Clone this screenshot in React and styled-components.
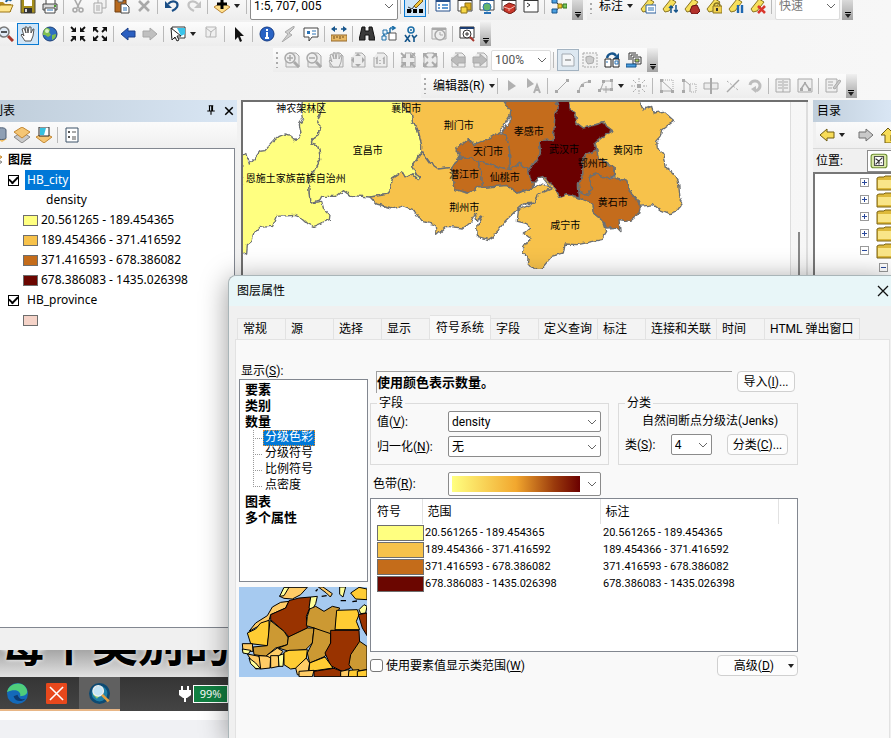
import React from "react";
import styled, { createGlobalStyle, css } from "styled-components";

const Global = createGlobalStyle`
  * { box-sizing: border-box; }
  body { margin: 0; background: #f0f0f0; }
  button, select, input { font: inherit; color: inherit; margin: 0; }
  body, #root { font-family: Roboto, "Noto Sans CJK SC", sans-serif; font-size: 12px; line-height: 16px; color: #000; }
`;

/* ---------- Icons ---------- */

const G = "#a9a9a9";
const zoomLens = (sign, c, handle) => (
  <>
    <path d="M10 10l5 5" stroke={handle} strokeWidth="3" />
    <circle cx="6" cy="6" r="5" fill={c === G ? "#eee" : "#dfeaf5"} stroke={c} strokeWidth="1.5" />
    <path d={sign === "+" ? "M3 6h6M6 3v6" : "M3 6h6"} stroke={c === G ? G : "#222"} strokeWidth="1.5" />
  </>
);
const page = <path d="M5 1h7l3 3v11H2V5" fill="#ececec" stroke={G} />;
const tag = (
  <path d="M1 11L9 1l5 3-7 9-4 1z" fill="#f6df5a" stroke="#8a7420" />
);
const arrowsIn = (c) => (
  <>
    <path d="M1 1l4 4M15 1l-4 4M1 15l4-4M15 15l-4-4" stroke={c} strokeWidth="1.8" />
    <path d="M6 1v5H1zM10 1v5h5zM6 15v-5H1zM10 15v-5h5z" fill={c} />
  </>
);
const arrowsOut = (c) => (
  <>
    <path d="M6 6L2 2M10 6l4-4M6 10l-4 4M10 10l4 4" stroke={c} strokeWidth="1.8" />
    <path d="M1 1h5L1 6zM15 1h-5l5 5zM1 15h5l-5-5zM15 15h-5l5-5z" fill={c} />
  </>
);
const leftArrow = (f, s) => <path d="M1 8l7-6v3h7v6H8v3z" fill={f} stroke={s} />;
const rightArrow = (f, s) => <path d="M15 8L8 2v3H1v6h7v3z" fill={f} stroke={s} />;
const hand = (f, s) => (
  <path
    d="M5 15l-4-6 1-1 2 2-2-7 2-1 2 5-1-6h2l1 6 1-6h2v6l2-4h1l-1 7-2 5z"
    fill={f}
    stroke={s}
  />
);

const icons = {
  open: <><path d="M0 4h5l2 2h6v8H0z" fill="#b98c1c" /><path d="M2 7h13l-3 7H0z" fill="#ffe58c" stroke="#9a7414" /><path d="M8 4c1-3 4-3 5-1" stroke="#1a5a94" strokeWidth="2" fill="none" /></>,
  save: <><path d="M1 1h14v14H1z" fill="#a58e1c" stroke="#4f4a36" /><path d="M4 1h8v7H4z" fill="#fff" /><path d="M4 10h8v5H4z" fill="#333" /><path d="M5 11h2v3H5z" fill="#ddd" /></>,
  print: <><path d="M4 1h9v6H4z" fill="#fff" stroke="#444" /><path d="M1 6h14v6H1z" fill="#d9d9d9" stroke="#444" /><path d="M3 10h10v5H3z" fill="#fff" stroke="#444" /><path d="M5 12h6" stroke="#2a72b5" /><path d="M12 8h2" stroke="#4a9a30" strokeWidth="2" /></>,
  cut: <><path d="M4 0l5 10M12 0L7 10" stroke={G} strokeWidth="1.6" /><circle cx="5" cy="12" r="2" fill="none" stroke={G} strokeWidth="1.6" /><circle cx="11" cy="12" r="2" fill="none" stroke={G} strokeWidth="1.6" /></>,
  copy: <><path d="M6 1h8v9H6z" fill="#f2f2f2" stroke={G} /><path d="M2 5h8v10H2z" fill="#f2f2f2" stroke={G} /><path d="M4 8h4M4 10h4M4 12h4" stroke={G} /></>,
  paste: <><path d="M1 2h11v12H1z" fill="#b7691e" stroke="#704012" /><path d="M4 0h5v4H4z" fill="#ddd" stroke="#555" /><path d="M7 6h5l3 3v6H7z" fill="#fff" stroke="#444" /><path d="M9 10h4M9 12h4" stroke="#2a72b5" /></>,
  del: <path d="M3 3l10 10M13 3L3 13" stroke={G} strokeWidth="2.6" />,
  undo: <><path d="M4 6c5-5 11-2 9 3-1 2-3 3-5 4" stroke="#1b4f86" strokeWidth="2.2" fill="none" /><path d="M1 3v7h7z" fill="#1b4f86" /></>,
  redo: <><path d="M12 6c-5-5-11-2-9 3 1 2 3 3 5 4" stroke="#c2c2c2" strokeWidth="2.2" fill="none" /><path d="M15 3v7H8z" fill="#c2c2c2" /></>,
  add: <><path d="M8 4l8 5-8 6-8-6z" fill="#ffdf8a" stroke="#b98335" /><path d="M8 1v10M3 6h10" stroke="#000" strokeWidth="3" /></>,
  sketch: <><path d="M1 9l4 2 3-4" stroke="#333" fill="none" /><path d="M7 8L14 1l2 2-7 7z" fill="#f1c53b" stroke="#7d5a16" /><path d="M2 13h12" stroke="#000" strokeDasharray="3 2" /><path d="M0 11h4v4H0zM6 11h4v4H6zM12 11h4v4h-4z" fill="#000" /></>,
  toc: <><path d="M1 2h14v11H1z" fill="#fff" stroke="#254f8a" /><path d="M1 3h14" stroke="#254f8a" strokeWidth="2" /><path d="M3 7h2M3 10h2M7 7h6M7 10h6" stroke="#2c78c4" strokeWidth="1.5" /></>,
  catalog: <><path d="M1 2h14v11H1z" fill="#fff" stroke="#444" /><path d="M1 2h14" stroke="#333" strokeWidth="2" /><path d="M8 5h6v7H8z" fill="#e0b01c" stroke="#8d7112" /><path d="M4 9h6v6H4z" fill="#f7d948" stroke="#8d7112" /></>,
  search: <><path d="M1 2h14v10H1z" fill="#fff" stroke="#444" /><path d="M1 2h14" stroke="#254f8a" strokeWidth="2" /><circle cx="8" cy="9" r="4" fill="#62b66c" stroke="#2a72b5" /><path d="M5 15h7" stroke="#2a72b5" strokeWidth="2" /></>,
  toolbox: <><path d="M1 2h14v10H1z" fill="#fff" stroke="#444" /><path d="M1 2h14" stroke="#333" strokeWidth="2" /><path d="M3 8l5-3 6 2v6l-5 3-6-3z" fill="#c9382b" stroke="#741a12" /><path d="M3 9l6 2 5-3M8 10v3" stroke="#f2b8b0" fill="none" /></>,
  python: <><path d="M1 2h14v12H1z" fill="#fff" stroke="#333" /><path d="M1 2h14" stroke="#333" strokeWidth="2" /><path d="M4 5l3 2-3 2" stroke="#333" fill="none" /></>,
  model: <><path d="M5 4l4 4-4 5M9 8h5" stroke="#333" fill="none" /><path d="M1 1h5v4H1zM1 11h5v4H1z" fill="#4b9fe0" stroke="#17558c" /><path d="M7 6h4v4H7z" fill="#f0c425" stroke="#8d7112" /><path d="M12 6h4v4h-4z" fill="#79c45a" stroke="#33761f" /></>,
  tagList: <>{tag}<path d="M6 7h10v8H6z" fill="#fff" stroke="#2a5f9c" /><path d="M8 10h6M8 12h6" stroke="#2a72b5" /></>,
  tagOrder: <>{tag}<path d="M9 15V8M7 10l2-2 2 2M14 7v7M12 12l2 2 2-2" stroke="#17558c" strokeWidth="1.5" fill="none" /></>,
  tagWeight: <>{tag}<path d="M8 8l5-1 3 6-3 3H8l-2-3z" fill="#b2302a" stroke="#611" /></>,
  tagLock: <>{tag}<path d="M8 8c0-4 6-4 6 0" stroke="#8a7420" strokeWidth="1.5" fill="none" /><path d="M7 8h9v7H7z" fill="#f0cf4e" stroke="#8a7420" /><path d="M11 10v3" stroke="#333" strokeWidth="2" /></>,
  tagPause: <>{tag}<path d="M10 7v8M14 7v8" stroke="#1d66b0" strokeWidth="2.4" /></>,
  tagNone: <>{tag}<path d="M8 8l7 7M15 8l-7 7" stroke="#d9362c" strokeWidth="2.6" /></>,
  zoomOut: zoomLens("-", "#777", "#a7372d"),
  hand: hand("#fff", "#555"),
  globe: <><circle cx="8" cy="8" r="7" fill="#2f6fc0" stroke="#1d3f75" /><path d="M4 2c4 0 5 2 3 4l2 3-3 2-3-2-2 0C1 6 2 3 4 2zM10 9l4-1c0 4-2 5-4 6z" fill="#7fbf4f" /><circle cx="5" cy="5" r="2" fill="#d6efc4" /></>,
  fixedIn: arrowsIn("#111"),
  fixedOut: arrowsOut("#111"),
  back: leftArrow("#2a5fc0", "#1a3f88"),
  forward: rightArrow("#c0c0c0", "#a8a8a8"),
  selectFeat: <><path d="M2 1h13v11H2z" fill="#fff" stroke="#333" /><path d="M7 2h8v6l-4 2z" fill="#3ac4ea" /><path d="M1 2l1 12 3-3 2 4 2-1-2-4h4z" fill="#fff" stroke="#222" /></>,
  clearSel: <><path d="M3 1h10v10H3z" fill="#f0f0f0" stroke="#b5b5b5" /><path d="M3 2l5 4 5-4M8 6l-1 5" stroke="#b5b5b5" fill="none" /></>,
  pointer: <path d="M4 1v13l3-3 2 5 2-1-2-5h4z" fill="#111" />,
  info: <><circle cx="8" cy="8" r="7" fill="#2a63c4" stroke="#153c85" /><path d="M8 3v2M7 7h1v5M6 12h4" stroke="#fff" strokeWidth="2" fill="none" /></>,
  bolt: <path d="M13 0L4 6l3 2-6 8 10-7-3-2 5-5z" fill="#cfcfcf" stroke={G} />,
  note: <><path d="M1 2h14v9H9l-3 4v-4H1z" fill="#fff" stroke="#444" /><path d="M4 5h3v3H4z" fill="#2a72b5" /><path d="M9 5h4M9 8h4" stroke="#2a72b5" /></>,
  measure: <><path d="M0 9h16v6H0z" fill="#e8b865" stroke="#95692b" /><path d="M3 10v3M6 10v2M9 10v3M12 10v2" stroke="#704a18" /><path d="M1 3h5M10 3h5" stroke="#17558c" strokeWidth="1.5" /><path d="M0 3l4-3v6zM16 3l-4-3v6z" fill="#17558c" /></>,
  find: <path d="M3 1h3v4h4V1h3l3 13h-6v-5H6v5H0z" fill="#3a3a3a" stroke="#111" />,
  route: <><path d="M3 12V7h6V2M9 2h4M11 0l3 2-3 2" stroke="#1d6fa8" fill="none" strokeWidth="1.5" /><path d="M1 10h4v4H1zM2 4h4v4H2z" fill="#eaf5fc" stroke="#1d6fa8" /><path d="M8 7h7v7H8z" fill="#fff" stroke="#555" /></>,
  xy: <><circle cx="8" cy="4" r="3" fill="none" stroke="#1d6fa8" strokeWidth="1.6" /><circle cx="8" cy="4" r="1" fill="#1d6fa8" /><path d="M2 9l5 7M7 9l-5 7M9 9l2 3v4M14 9l-3 3" stroke="#15558a" strokeWidth="1.6" fill="none" /></>,
  clock: <><path d="M1 2h14v11H1z" fill="#efefef" stroke={G} /><path d="M1 3h14" stroke={G} strokeWidth="2" /><circle cx="9" cy="9" r="5" fill="#eee" stroke={G} strokeWidth="1.5" /><path d="M9 6v3h3" stroke={G} fill="none" /></>,
  viewer: <><path d="M1 1h14v11H1z" fill="#fff" stroke="#333" /><path d="M1 2h14" stroke="#1b3d72" strokeWidth="2" /><circle cx="8" cy="8" r="4" fill="#fff" stroke="#333" /><path d="M6 8h4M8 6v4" stroke="#333" /><path d="M11 11l4 4" stroke="#a7372d" strokeWidth="2" /></>,
  pZoomIn: <>{page}{zoomLens("+", G, G)}</>,
  pZoomOut: <>{page}{zoomLens("-", G, G)}</>,
  pHand: <>{page}{hand("#eee", G)}</>,
  pFull: <>{page}<path d="M8 1l3 3H5zM8 15l-3-3h6zM1 8l3-3v6zM15 8l-3 3V5z" fill={G} /></>,
  p11: <>{page}<path d="M4 7l1-1v6M11 7l1-1v6M8 8v1M8 11v1" stroke={G} strokeWidth="1.5" fill="none" /></>,
  pIn: <>{page}{arrowsIn(G)}</>,
  pOut: <>{page}{arrowsOut(G)}</>,
  pBack: <>{page}{leftArrow("#bbb", G)}</>,
  pNext: <>{page}{rightArrow("#bbb", G)}</>,
  draft: <><path d="M2 2h9l3 3v9H2z" fill="#f4f6f8" stroke="#a2a9b0" /><path d="M5 8h6" stroke="#999" strokeWidth="1.5" /></>,
  focus: <><path d="M1 1h14v14H1z" fill="#f1f1f1" stroke={G} strokeDasharray="2 1" /><path d="M4 5l4-1 4 2-1 5-5 1-2-3z" fill="#ccc" stroke={G} /></>,
  layoutSwap: <><path d="M3 6c1-5 7-6 9-2" stroke="#17558c" strokeWidth="2.4" fill="none" /><path d="M15 1v6H9z" fill="#17558c" /><path d="M1 7h6v8H1zM9 7h6v8H9z" fill="#fff" stroke="#222" /><path d="M2 10h2M11 9h3v3h-3z" stroke="#2a72b5" /></>,
  pages: <><path d="M3 8V1h7M5 8V3h7" fill="none" stroke="#333" /><path d="M7 5h8v7H7z" fill="#fff" stroke="#333" /><path d="M9 7h4v3H9z" fill="#a9d05a" stroke="#444" /><path d="M0 12h10v3H0z" fill="#4b9fe0" stroke="#17558c" /></>,
  eArrow: <path d="M4 2l8 6-8 5z" fill="#b0b0b0" />,
  eArrowA: <><path d="M1 0l7 6-7 4z" fill="#b0b0b0" /><path d="M8 15l3-8 3 8M9 12h4" stroke="#b0b0b0" strokeWidth="2" fill="none" /></>,
  eLine: <><path d="M3 13L13 3" stroke={G} /><path d="M1 12h3v3H1zM12 1h3v3h-3z" fill={G} /></>,
  eArc: <><path d="M3 13C4 7 7 4 13 4" stroke={G} fill="none" /><path d="M1 12h3v3H1zM12 2h3v3h-3zM5 6h3v3H5z" fill={G} /></>,
  eTrace: <><path d="M2 13L6 3h8v8H2" stroke={G} fill="none" /><path d="M4 2h3v3H4zM12 1h3v3h-3zM0 11h3v3H0zM12 10h3v3h-3z" fill={G} /><path d="M8 8v7M5 12h7" stroke={G} /></>,
  eSnap: <><path d="M8 0v4M8 12v4M0 8h4M12 8h4M2 2l3 3M14 2l-3 3M2 14l3-3M14 14l-3-3" stroke={G} strokeDasharray="2 1" /><path d="M6 6h4v4H6z" fill={G} /></>,
  eVert: <><path d="M2 2v11h12L2 2" stroke={G} fill="none" /><path d="M1 1h3v3H1zM1 12h3v3H1zM12 12h3v3h-3z" fill={G} /><path d="M4 2h10v10" stroke={G} fill="none" strokeDasharray="1 1" /></>,
  eReshape: <><path d="M3 2v12M3 2l6 5v7" stroke={G} fill="none" /><path d="M1 1h3v3H1zM1 12h3v3H1z" fill={G} /><path d="M9 6h6v8H9" stroke={G} strokeDasharray="1 1" fill="none" /></>,
  eCut: <><path d="M1 5h14v6H1z" fill="#ececec" stroke={G} /><path d="M8 0v16" stroke={G} strokeWidth="2" /></>,
  eSplit: <><path d="M2 14L14 2" stroke={G} strokeWidth="1.5" /><path d="M2 3l11 9" stroke={G} strokeDasharray="2 2" /></>,
  eRotate: <><path d="M3 7c1-6 10-5 10 1 0 3-2 4-4 5" stroke="#bdbdbd" strokeWidth="3" fill="none" /><path d="M4 11l5-3v7z" fill="#bdbdbd" /></>,
  eTable: <><path d="M1 1h14v13H1z" fill="#efefef" stroke={G} /><path d="M3 4h4M9 4h4M3 7h4M9 7h4M3 10h4M9 10h4M8 2v12" stroke={G} /></>,
  eProps: <><path d="M1 1h14v13H1z" fill="#efefef" stroke={G} /><path d="M4 11l4-6 4 6" stroke={G} strokeWidth="1.5" fill="none" /><path d="M3 10h3v3H3zM11 10h3v3h-3zM7 4h2v2H7z" fill={G} /></>,
  eCreate: <><path d="M1 1h11v13H1z" fill="#efefef" stroke={G} /><path d="M3 4h5M3 7h5M3 10h4" stroke={G} /><path d="M8 10l6-8 2 1-6 8z" fill="#ccc" stroke={G} /></>,
  cylinder: <><path d="M5 12l5-2 5 2-5 3z" fill="#f3bf62" /><path d="M5 3c0-3 9-3 9 0v8c0 2-9 2-9 0z" fill="#8fa0b4" stroke="#4e5f75" /></>,
  layers: <><path d="M8 5l8 5-8 6-8-6z" fill="#c9c9c9" stroke="#888" /><path d="M8 0l8 5-8 6-8-6z" fill="#f5c674" stroke="#c28732" /></>,
  visible: <><path d="M8 6l8 4-8 6-8-6z" fill="#f5c674" stroke="#c28732" /><path d="M3 0h10v9H3z" fill="#fff" stroke="#222" /><path d="M4 1h6l-2 7H4z" fill="#36c1e0" /></>,
  listOpts: <><path d="M2 1h12v14H2z" fill="#fff" stroke="#3c5269" /><path d="M4 4h2v2H4zM4 9h2v2H4z" fill="#555" /><path d="M8 5h4M8 10h4M8 12h4" stroke="#555" /></>,
  cBack: leftArrow("#f7dc57", "#6e5b10"),
  cNext: rightArrow("#c9c9c9", "#707070"),
  cUp: <path d="M8 1l7 7h-4v6h5v2H5V8H1z" fill="#f7dc57" stroke="#6e5b10" />,
  gdb: <><rect x="1" y="2" width="14" height="12" rx="2" fill="#dcebaa" stroke="#6d8f30" /><path d="M4 4h8v8H4z" fill="#fff" stroke="#4f4f4f" /><path d="M5 11l6-6M5 6l3 2v3M10 9v1" stroke="#333" fill="none" /></>,
  folder: <><path d="M1 3l2-1h5l1-1h7v14H1z" fill="#ddb93b" stroke="#7a6314" /><path d="M2 5h14v8H2z" fill="#f9e588" /></>,
  pin: <path d="M5 1h6M6 1v7M10 1v7M9 1v7M3 8h10M8 8v5" stroke="#000" strokeWidth="1.5" fill="none" />,
  close: <path d="M3 3l10 10M13 3L3 13" stroke="#000" strokeWidth="2" />,
  closeThin: <path d="M3 3l10 10M13 3L3 13" stroke="#111" strokeWidth="1.3" />,
  edge: <><circle cx="8" cy="8" r="8" fill="#1469b8" /><path d="M0 7C1 1 10-2 14 3c3 4 1 7-4 7 1-4-4-6-10-3z" fill="#4fce7b" /><path d="M5 10c1 4 6 5 9 2-3 1-5 0-6-3z" fill="#0d3b73" /></>,
  redApp: <><rect width="16" height="16" rx="1" fill="#e8481c" /><path d="M3 3l10 10M13 3L3 13" stroke="#fff" strokeWidth="1.2" /></>,
  arcmap: <><circle cx="8" cy="8" r="7" fill="#1d7fa8" stroke="#0d4a73" strokeWidth="2" /><path d="M4 3l4 1 2 4-4 4-3-3z" fill="#8ac66a" /><circle cx="7" cy="6" r="4" fill="#c3e4f5" stroke="#eee" /><path d="M10 9l5 5" stroke="#e4a03f" strokeWidth="2" /></>,
  plug: <><path d="M5 0v5M11 0v5M8 11v5" stroke="#fff" strokeWidth="2" /><path d="M2 4h12v5l-4 3H6L2 9z" fill="#fff" /></>,
};

const Svg = styled.svg`
  display: block;
  flex: none;
`;
const Icon = ({ name, size = 16 }) => (
  <Svg width={size} height={size} viewBox="0 0 16 16" fill="none" aria-hidden="true">
    {icons[name]}
  </Svg>
);
const Caret = () => (
  <Svg width="6" height="4" viewBox="0 0 6 4" aria-hidden="true">
    <path d="M0 0h6L3 4z" fill="#222" />
  </Svg>
);
const Chevron = styled(({ className }) => (
  <svg className={className} width="10" height="6" viewBox="0 0 10 6" aria-hidden="true">
    <path d="M1 1l4 4 4-4" fill="none" stroke="#666" />
  </svg>
))`
  flex: none;
  justify-self: end;
  margin-right: 3px;
  pointer-events: none;
`;

/* ---------- Toolbars ---------- */

const Page = styled.div`
  position: relative;
  display: flex;
  flex-direction: column;
  height: 100vh;
  overflow: hidden;
  background: linear-gradient(90deg, #efefef, #f7f7f7);
`;
const Toolbars = styled.header`
  display: flex;
  flex-direction: column;
  gap: 2px;
  padding-bottom: 2px;
`;
const BarRow = styled.div`
  display: flex;
  align-items: flex-end;
  gap: 4px;
  height: ${(p) => (p.$first ? 20 : 24)}px;
  padding-left: ${(p) => p.$indent || 0}px;
`;
const Bar = styled.div`
  display: flex;
  align-items: center;
  flex: none;
  height: ${(p) => (p.$tall ? 28 : 24)}px;
  margin-left: ${(p) => (p.$clipped ? -5 : 0)}px;
  background: linear-gradient(#fcfcfc, #ededed);
`;
const Tool = styled.button`
  display: flex;
  align-items: center;
  justify-content: center;
  flex: none;
  width: 22px;
  height: 22px;
  padding: 0;
  border: 1px solid transparent;
  background: none;
  ${(p) =>
    p.$menu &&
    css`
      justify-content: flex-start;
      gap: 4px;
      width: ${p.$menu}px;
      padding-left: 2px;
    `}
  ${(p) =>
    p.$on &&
    css`
      border-color: #0a7ad2;
      background: #cfe5f7;
    `}
  ${(p) =>
    p.$muted &&
    css`
      border-color: #a3b3c1;
      background: #dde8f1;
    `}
`;
const TextTool = styled.button`
  display: flex;
  align-items: center;
  gap: 4px;
  height: 22px;
  padding: 0 ${(p) => (p.$snug ? 0 : 4)}px 0 4px;
  border: 0;
  background: none;
  white-space: nowrap;
`;
const Sep = styled.i`
  flex: none;
  width: 1px;
  height: 16px;
  margin: 0 3px 0 2px;
  background: #b9b9b9;
`;
const Grip = styled.i`
  flex: none;
  width: 2px;
  height: 16px;
  margin: 0 3px;
  background: repeating-linear-gradient(#aaa 0 2px, transparent 2px 5px);
`;
const More = styled.button`
  display: flex;
  flex-direction: column;
  align-items: center;
  justify-content: flex-end;
  gap: 1px;
  width: 11px;
  height: 100%;
  margin-left: 2px;
  padding: 0 0 2px;
  border: 0;
  background: linear-gradient(#f0f0f0, #a2a2a2);
  &::before {
    content: "";
    width: 6px;
    height: 1px;
    background: #000;
  }
`;
const SelectBox = styled.span`
  display: grid;
  flex: none;
  align-items: center;
  width: ${(p) => p.$w}px;
  height: ${(p) => p.$h || 21}px;
  border: 1px solid ${(p) => (p.$pale ? "#dcdcdc" : "#8b8b8b")};
  border-radius: 2px;
  background: #fff;
  & > * {
    grid-area: 1 / 1;
  }
`;
const NativeSelect = styled.select`
  appearance: none;
  width: 100%;
  height: 100%;
  padding: 0 16px 0 3px;
  border: 0;
  background: none;
  color: ${(p) => p.$color || "#000"};
  font-size: 12px;
`;
const Select = ({ w, h, pale, label, id, value, color }) => (
  <SelectBox $w={w} $h={h} $pale={pale}>
    <NativeSelect id={id} aria-label={label} defaultValue={value} $color={color}>
      <option>{value}</option>
    </NativeSelect>
    <Chevron />
  </SelectBox>
);
const Tools = ({ names }) =>
  names.split(" ").map((n, i) =>
    n === "|" ? (
      <Sep key={i} />
    ) : (
      <Tool key={i} aria-label={n}>
        <Icon name={n} />
      </Tool>
    )
  );
const Overflow = () => (
  <More aria-label="更多">
    <Caret />
  </More>
);
const MenuTool = ({ name, width = 33 }) => (
  <Tool $menu={width} aria-label={name}>
    <Icon name={name} />
    <Caret />
  </Tool>
);

const AppToolbars = () => (
  <Toolbars>
    <BarRow $first>
      <Bar $tall $clipped>
        <Tools names="open save print | cut copy paste del | undo redo |" />
        <MenuTool name="add" />
        <Sep />
        <Select w={148} h={28} label="比例尺" value="1:5, 707, 005" />
        <Sep />
        <Tool $on aria-label="编辑器工具条"><Icon name="sketch" /></Tool>
        <Sep />
        <Tools names="toc catalog search toolbox python | model" />
        <Overflow />
      </Bar>
      <Bar $tall>
        <Grip />
        <TextTool>标注 <Caret /></TextTool>
        <Tools names="tagList tagOrder tagWeight tagLock tagPause tagNone |" />
        <Select w={65} h={28} pale label="标注引擎" value="快速" color="#777" />
        <Overflow />
      </Bar>
    </BarRow>
    <BarRow>
      <Bar $clipped>
        <Tools names="zoomOut" />
        <Tool $on aria-label="平移"><Icon name="hand" /></Tool>
        <Tools names="globe | fixedIn fixedOut | back forward |" />
        <MenuTool name="selectFeat" />
        <Tools names="clearSel | pointer | info bolt note | measure | find route xy | clock | viewer" />
        <Overflow />
      </Bar>
    </BarRow>
    <BarRow $indent={273}>
      <Bar>
        <Grip />
        <Tools names="pZoomIn pZoomOut pHand pFull p11 | pIn pOut | pBack pNext" />
        <Select w={60} label="页面缩放" value="100%" pale color="#555" />
        <Sep />
        <Tool $muted aria-label="切换描绘模式"><Icon name="draft" /></Tool>
        <Tools names="focus layoutSwap pages" />
        <Overflow />
      </Bar>
    </BarRow>
    <BarRow $indent={421}>
      <Bar>
        <Grip />
        <TextTool $snug>编辑器(R) <Caret /></TextTool>
        <Tools names="| eArrow eArrowA | eLine eArc" />
        <MenuTool name="eTrace" />
        <Tools names="eSnap | eVert eReshape eCut eSplit eRotate | eTable eProps | eCreate" />
        <Overflow />
      </Bar>
    </BarRow>
  </Toolbars>
);

/* ---------- Workspace ---------- */

const Workspace = styled.main`
  display: flex;
  flex: 1;
  min-height: 0;
  gap: 4px;
`;
const Pane = styled.section`
  display: flex;
  flex-direction: column;
  flex: none;
  width: ${(p) => p.$w}px;
  overflow: hidden;
  background: #f0f0f0;
`;
const PaneTitle = styled.h2`
  display: flex;
  align-items: center;
  gap: 2px;
  flex: none;
  height: 22px;
  margin: 0;
  padding-left: ${(p) => (p.$inset ? 4 : 0)}px;
  font-size: 12px;
  font-weight: 400;
  background: linear-gradient(90deg, #c0cedb, #d9e6f4);
`;
const ClippedName = styled.span`
  flex: 1;
  margin-left: -9px;
`;
const TinyButton = styled.button`
  display: flex;
  align-items: center;
  justify-content: center;
  width: 16px;
  height: 16px;
  padding: 0;
  border: 0;
  background: none;
`;
const PaneBar = styled.div`
  display: flex;
  align-items: center;
  flex: none;
  height: 26px;
  margin-left: ${(p) => (p.$clipped ? -11 : 3)}px;
  background: linear-gradient(#fbfbfb, #efefef);
`;
const Toc = styled.ul`
  flex: 1;
  margin: 0 2px 0 0;
  padding: 1px 0;
  list-style: none;
  background: #fff;
  border: 1px solid #828790;
  border-left: 0;
  font-family: "Noto Sans", "Noto Sans CJK SC", sans-serif;
`;
const TocRow = styled.li`
  display: flex;
  align-items: center;
  gap: ${(p) => (p.$swatch ? 3 : 6)}px;
  height: 20px;
  padding-left: ${(p) => p.$indent}px;
  font-weight: ${(p) => (p.$bold ? 700 : 400)};
`;
const EdgeIcon = styled.span`
  margin-left: -14px;
`;
const Swatch = styled.i`
  width: 15px;
  height: 11px;
  border: 1px solid #6e6e6e;
  background: ${(p) => p.$color};
`;
const Check = styled.input`
  appearance: none;
  display: grid;
  flex: none;
  place-items: center;
  width: ${(p) => (p.$soft ? 13 : 11)}px;
  height: ${(p) => (p.$soft ? 13 : 11)}px;
  border: 1px solid ${(p) => (p.$soft ? "#777" : "#000")};
  border-radius: ${(p) => (p.$soft ? 3 : 0)}px;
  background: #fff;
  &:checked::after {
    content: "";
    width: 7px;
    height: 4px;
    border: solid #000;
    border-width: 0 0 2px 2px;
    transform: translateY(-1px) rotate(-45deg);
  }
`;
const TocName = styled.label`
  padding: 2px;
  color: ${(p) => (p.$selected ? "#fff" : "#000")};
  background: ${(p) => (p.$selected ? "#0078d7" : "transparent")};
`;
const StatusStrip = styled.div`
  flex: none;
  height: 22px;
`;
const classes = [
  ["#ffff80", "20.561265 - 189.454365"],
  ["#f7c24b", "189.454366 - 371.416592"],
  ["#c46c1a", "371.416593 - 678.386082"],
  ["#6b0600", "678.386083 - 1435.026398"],
];

const Contents = () => (
  <Pane $w={237}>
    <PaneTitle>
      <ClippedName>列表</ClippedName>
      <TinyButton aria-label="固定"><Icon name="pin" size={12} /></TinyButton>
      <TinyButton aria-label="关闭"><Icon name="close" size={12} /></TinyButton>
    </PaneTitle>
    <PaneBar $clipped>
      <Tools names="cylinder layers visible | listOpts" />
    </PaneBar>
    <Toc>
      <TocRow $indent={0} $bold>
        <EdgeIcon><Icon name="layers" /></EdgeIcon>
        图层
      </TocRow>
      <TocRow $indent={8}>
        <Check type="checkbox" id="city" defaultChecked />
        <TocName htmlFor="city" $selected>HB_city</TocName>
      </TocRow>
      <TocRow $indent={46}>density</TocRow>
      {classes.map(([c, t]) => (
        <TocRow key={c} $indent={23} $swatch><Swatch $color={c} />{t}</TocRow>
      ))}
      <TocRow $indent={8}>
        <Check type="checkbox" id="prov" defaultChecked />
        <TocName htmlFor="prov">HB_province</TocName>
      </TocRow>
      <TocRow $indent={23}><Swatch $color="#f5d3c8" /></TocRow>
    </Toc>
    <StatusStrip />
  </Pane>
);

/* Hubei prefectures; drawing units are a third of a pixel. */
const regions = [
  [0, "6,175 20,165 28,195 45,180 60,160 75,158 100,130 118,115 135,108 155,112 163,128 175,122 183,105 178,80 190,60 185,30 188,0 250,0 248,30 232,60 240,80 235,110 220,120 213,135 232,140 238,160 242,185 228,210 205,240 208,290 210,315 245,310 250,330 270,350 268,365 250,372 220,385 205,378 185,360 165,352 110,355 98,385 60,388 42,405 35,430 22,440 20,465 0,470"],
  [0, "250,0 248,30 232,60 240,80 235,110 220,120 213,135 232,140 238,160 242,185 228,210 205,240 208,290 210,315 240,305 245,295 290,295 310,278 330,292 390,297 440,290 450,280 458,240 485,222 495,240 518,228 535,245 541,238 530,230 515,205 530,185 545,160 545,140 537,110 530,85 518,75 515,50 495,30 485,0"],
  [1, "485,0 785,0 810,30 812,50 790,85 770,115 740,125 705,140 685,122 645,155 660,170 635,208 595,213 570,195 545,160 545,140 537,110 530,85 518,75 515,50 495,30"],
  [1, "545,160 570,195 595,213 635,208 645,275 685,285 715,265 728,268 800,262 830,285 880,270 905,255 935,272 895,290 885,315 850,318 830,335 795,370 760,415 745,425 712,415 710,390 728,355 710,370 706,345 690,375 670,390 620,385 590,412 585,380 545,370 520,335 485,322 455,330 410,318 390,297 440,290 450,280 458,240 485,222 495,240 518,228 535,245 541,238 530,230 515,205 530,185"],
  [2, "635,208 655,180 690,180 715,190 725,230 728,268 715,265 685,285 645,275"],
  [2, "645,155 685,122 700,140 740,125 775,105 800,115 808,150 812,215 780,208 740,195 715,190 690,180 655,180 660,170"],
  [2, "715,190 740,195 780,208 812,215 838,195 850,208 865,210 870,240 880,258 880,270 830,285 800,262 728,268 725,230"],
  [2, "785,0 945,0 955,30 945,50 940,125 900,130 900,165 890,190 865,210 850,208 838,195 812,215 808,150 800,115 785,105 810,70 812,40"],
  [1, "988,0 1196,0 1210,35 1235,25 1240,45 1270,40 1302,68 1265,95 1260,118 1250,130 1252,150 1270,165 1280,210 1300,225 1315,250 1320,300 1328,315 1310,340 1290,347 1260,335 1240,320 1202,325 1190,305 1168,280 1160,250 1125,238 1122,210 1075,180 1070,155 1065,135 1090,115 1118,98 1100,85 1090,68 1075,78 1030,90 1010,75 1008,50 990,35"],
  [1, "905,235 935,272 895,290 885,315 835,335 832,370 855,375 870,390 850,405 870,420 850,450 845,465 865,475 862,500 880,510 905,512 935,475 970,465 975,438 1010,440 1060,430 1085,425 1100,400 1090,370 1060,345 1055,315 1018,300 980,290 960,298 945,270 925,240 910,235"],
  [2, "1035,170 1070,155 1075,180 1122,210 1120,235 1100,242 1070,228 1048,235 1055,270 1045,290 1020,285 1015,260 1028,230 1028,190"],
  [2, "1048,235 1070,228 1100,242 1125,238 1160,250 1168,280 1190,305 1202,325 1195,350 1170,370 1137,365 1140,398 1130,388 1100,390 1090,370 1060,345 1055,315 1018,300 1020,285 1045,290 1055,270"],
  [3, "945,0 988,0 990,35 1008,50 1010,75 1030,90 1075,78 1090,68 1100,85 1118,98 1090,115 1065,135 1070,155 1035,170 1028,190 1028,230 1015,260 1018,300 980,290 960,298 945,270 910,235 895,240 880,258 870,240 865,210 890,190 902,165 898,128 940,125 945,50 955,30"],
];
const cities = [
  [184, 42, "神农架林区"], [499, 42, "襄阳市"], [656, 93, "荆门市"], [383, 168, "宜昌市"],
  [744, 172, "天门市"], [866, 112, "孝感市"], [972, 166, "武汉市"], [1164, 168, "黄冈市"],
  [1058, 207, "鄂州市"], [672, 241, "潜江市"], [794, 249, "仙桃市"], [1118, 324, "黄石市"],
  [673, 340, "荆州市"], [976, 393, "咸宁市"], [167, 252, "恩施土家族苗族自治州"],
];

const MapFrame = styled.section`
  display: flex;
  flex: 1;
  min-width: 0;
  margin-right: 1px;
  border-top: 2px solid #6f6f6f;
`;
const MapCanvas = styled.div`
  flex: 1;
  overflow: hidden;
  border-left: 2px solid #6f6f6f;
  border-right: 1px solid #ddd;
  background: #fff;
`;
const ScrollTrack = styled.div`
  width: 17px;
  padding: 130px 0 0 7px;
  border-right: 2px solid #ddd;
`;
const ScrollThumb = styled.div`
  width: 2px;
  height: 300px;
  background: #888;
`;
const MapLabel = styled.text`
  font-family: "Noto Sans CJK SC", sans-serif;
  font-size: 30px;
  text-anchor: middle;
`;
const MapView = () => (
  <MapFrame>
    <MapCanvas>
      <Svg width="549" height="184" viewBox="9 12 1647 552">
        <filter id="coast" x="0" y="0" width="1" height="1">
          <feTurbulence type="fractalNoise" baseFrequency="0.06" numOctaves="2" seed="4" />
          <feDisplacementMap in="SourceGraphic" scale="14" xChannelSelector="R" yChannelSelector="G" />
        </filter>
        <g filter="url(#coast)" stroke="#6c6f72" strokeWidth="4" strokeLinejoin="round">
          {regions.map(([c, pts]) => <polygon key={pts} points={pts} fill={classes[c][0]} />)}
        </g>
        {cities.map(([x, y, t]) => <MapLabel key={t} x={x} y={y}>{t}</MapLabel>)}
      </Svg>
    </MapCanvas>
    <ScrollTrack><ScrollThumb /></ScrollTrack>
  </MapFrame>
);

const LocationRow = styled.div`
  display: flex;
  align-items: center;
  justify-content: space-between;
  flex: none;
  height: 24px;
  padding-left: 3px;
  border-top: 1px solid #d8d8d8;
`;
const LocationBox = styled.button`
  display: flex;
  align-items: center;
  width: 24px;
  height: 22px;
  padding: 0 0 0 2px;
  border: 1px solid #8b8b8b;
  border-right: 0;
  background: #fff;
`;
const Catalog = styled.ul`
  flex: 1;
  margin: 0;
  padding: 0;
  list-style: none;
  border: 2px solid #777;
  border-width: 2px 0 0 2px;
  background: #fff;
`;
const CatalogRow = styled.li`
  display: flex;
  align-items: center;
  gap: 7px;
  height: 17px;
  padding-left: ${(p) => p.$indent}px;
`;
const Expander = styled.button`
  display: flex;
  flex: none;
  align-items: center;
  justify-content: center;
  width: 9px;
  height: 9px;
  padding: 0;
  border: 1px solid #9a9a9a;
  background: #fff;
`;
const Node = ({ open, indent, children }) => (
  <CatalogRow $indent={indent}>
    <Expander aria-label={open ? "折叠" : "展开"}>
      <Svg width="5" height="5" viewBox="0 0 5 5">
        <path d={open ? "M0 2h5v1H0z" : "M0 2h5v1H0zM2 0h1v5H2z"} fill="#2b4a9c" />
      </Svg>
    </Expander>
    {children}
  </CatalogRow>
);
const CatalogPane = () => (
  <Pane $w={78}>
    <PaneTitle $inset>目录</PaneTitle>
    <PaneBar>
      <MenuTool name="cBack" width={39} />
      <Tools names="cNext cUp" />
    </PaneBar>
    <LocationRow>
      位置:
      <LocationBox aria-label="位置"><Icon name="gdb" size={18} /></LocationBox>
    </LocationRow>
    <Catalog>
      {[0, 0, 0, 0, 1].map((open, i) => (
        <Node key={i} open={open} indent={45}><Icon name="folder" /></Node>
      ))}
      <Node open indent={64} />
    </Catalog>
  </Pane>
);

/* ---------- Bottom strip ---------- */

const Bottom = styled.footer`
  flex: none;
  height: 88px;
  background: #f0f1f4;
`;
const Caption = styled.div`
  display: flex;
  align-items: flex-end;
  height: 27px;
  padding-bottom: 12px;
  overflow: hidden;
  font-size: 46px;
  line-height: 40px;
  font-weight: 700;
  white-space: nowrap;
  text-shadow: 0 0 4px #fff;
  background: linear-gradient(#a6a6a6, #e2e2e2);
`;
const Taskbar = styled.div`
  display: flex;
  height: 34px;
  background: linear-gradient(#353535, #444);
`;
const TaskButton = styled.button`
  display: flex;
  align-items: center;
  justify-content: center;
  width: ${(p) => p.$w}px;
  padding: 0;
  border: 0;
  border-bottom: 2px solid #e8b686;
  background: ${(p) => (p.$on ? "#606060" : "none")};
`;
const Power = styled.div`
  display: flex;
  align-items: center;
  margin-left: 57px;
`;
const Battery = styled.span`
  width: 35px;
  border: 1px solid #fff;
  background: #118042;
  color: #fff;
  font: 11px/16px "Noto Sans", sans-serif;
  text-align: center;
`;
const WhiteBand = styled.div`
  height: 9px;
  background: #fff;
`;
const BottomStrip = () => (
  <Bottom>
    <Caption>每个类别的</Caption>
    <Taskbar>
      <TaskButton $w={34} aria-label="Edge"><Icon name="edge" size={21} /></TaskButton>
      <TaskButton $w={45} aria-label="X"><Icon name="redApp" size={21} /></TaskButton>
      <TaskButton $w={41} $on aria-label="ArcMap"><Icon name="arcmap" size={21} /></TaskButton>
      <Power><Icon name="plug" /><Battery>99%</Battery></Power>
    </Taskbar>
    <WhiteBand />
  </Bottom>
);

/* ---------- Layer properties dialog ---------- */

const Dialog = styled.section`
  position: absolute;
  inset: 275px 0 0 228px;
  display: flex;
  flex-direction: column;
  border: 1px solid #a9b5b8;
  border-width: 1px 0 0 1px;
  border-radius: 8px 0 0 0;
  background: #f0f0f0;
  box-shadow: 0 4px 28px rgba(0, 0, 0, 0.4);
`;
const DialogTitle = styled.h1`
  display: flex;
  align-items: center;
  justify-content: space-between;
  flex: none;
  height: 30px;
  margin: 0;
  padding-left: 8px;
  border-radius: 8px 0 0 0;
  font-size: 12px;
  font-weight: 400;
  background: #e8f6f8;
`;
const Tabs = styled.div`
  display: flex;
  align-items: flex-end;
  flex: none;
  height: 33px;
  padding-left: 8px;
`;
const Tab = styled.button`
  flex: none;
  min-width: 48px;
  height: ${(p) => (p.$active ? 24 : 21)}px;
  padding: 0 6px 0 ${(p) => (p.$active ? 6 : 5)}px;
  border: 1px solid #e2e2e2;
  border-width: 1px 1px 0 0;
  background: ${(p) => (p.$active ? "#f9f9f9" : "#f3f3f3")};
  text-align: left;
  white-space: nowrap;
  &:first-child {
    width: 49px;
    border-left-width: 1px;
  }
  &:nth-child(n + 6) {
    padding-right: 5px;
  }
`;
const TabPage = styled.div`
  display: grid;
  grid-template-columns: 129px minmax(0, 428px);
  align-items: start;
  gap: 2px;
  flex: 1;
  margin: 0 1px 0 6px;
  padding: 23px 0 0 3px;
  border: 1px solid #e2e2e2;
  border-bottom: 0;
  background: #f9f9f9;
`;
const Column = styled.div`
  display: flex;
  flex-direction: column;
`;
const ShowTitle = styled.span`
  padding-left: 2px;
`;
const ShowList = styled.ul`
  height: 203px;
  margin: 0 0 5px;
  padding: 2px 5px;
  list-style: none;
  border: 1px solid #828790;
  background: #fff;
  font-size: 13px;
  font-weight: 700;
`;
const SubList = styled.ul`
  margin: 0 0 0 8px;
  padding: 0;
  list-style: none;
  font-size: 12px;
  font-weight: 400;
`;
const SubItem = styled.li`
  display: grid;
  grid-template-columns: 10px max-content;
  height: 16px;
  &::before {
    content: "";
    background:
      linear-gradient(90deg, #999 50%, transparent 50%) 0 8px / 2px 1px repeat-x,
      linear-gradient(#999 50%, transparent 50%) 0 0 / 1px 2px repeat-y;
    height: ${(p) => (p.$last ? 9 : 16)}px;
  }
  span {
    padding: 0 2px;
    line-height: 15px;
    color: ${(p) => (p.$selected ? "#fff" : "#000")};
    background: ${(p) => (p.$selected ? "#0078d7" : "none")};
    outline: ${(p) => (p.$selected ? "1px dotted #e08a2c" : "none")};
    outline-offset: -1px;
  }
`;
const Preview = () => {
  const T = "#cc9933", Y = "#ffcc33", P = "#ffcc66", B = "#993300", L = "#ffff99";
  const land = [
    [P, "132,290 150,263 215,263 195,285 170,298 145,296"], [L, "132,290 145,263 160,263 145,288"],
    [P, "248,262 262,262 290,282 284,292 272,280"], [L, "312,262 330,262 322,292 312,284"],
    [Y, "345,280 370,263 394,268 394,300 360,298"], [L, "370,330 385,315 394,320 390,340 375,342"],
    [P, "95,348 110,322 135,308 160,305 150,325 105,345 100,362 40,395 60,370"],
    [B, "105,345 150,325 160,303 190,295 225,292 222,325 212,350 215,385 160,412 145,395 105,360"],
    [L, "225,292 245,290 240,312 230,330 220,325"],
    [T, "222,328 240,320 265,335 290,320 312,325 303,345 298,402 275,405 235,385 212,378 215,350"],
    [Y, "303,332 365,330 370,345 362,365 372,390 298,390"],
    [Y, "35,400 60,388 75,370 100,362 100,402 95,438 45,432"],
    [T, "103,362 145,395 158,415 155,435 120,445 90,470 55,465 52,442 95,438"],
    [T, "158,412 215,385 235,385 230,430 210,450 160,455 128,445 155,435"],
    [T, "235,385 285,402 285,430 268,470 222,490 215,460 230,430"],
    [B, "285,392 370,392 372,430 345,470 345,505 320,515 285,498 268,460 285,430"],
    [T, "372,425 394,440 394,510 355,515 340,495 345,465"], [B, "368,345 394,340 394,408 380,385"],
    [P, "20,432 50,432 52,455 22,455"], [L, "20,448 45,452 38,463 22,460"],
    [P, "35,463 70,470 80,505 60,508 45,480"], [L, "40,475 60,490 75,508 60,506 45,492"],
    [P, "70,468 105,470 103,505 75,508"], [P, "92,468 125,445 142,455 130,470 105,475"],
    [P, "105,468 128,468 130,500 105,505"], [L, "128,468 145,462 142,500 130,500"],
    [Y, "145,458 160,452 215,450 212,475 185,505 165,508 145,495"],
    [P, "212,475 222,490 215,531 185,525 180,505"], [Y, "222,490 268,472 292,505 245,512 220,515"],
    [B, "235,515 295,506 318,515 315,531 235,531"], [P, "190,515 235,512 230,531 190,531"],
    [Y, "340,512 370,510 365,531 335,531"], [P, "315,515 340,510 338,531 315,531"], [Y, "365,515 394,510 394,531 365,531"],
  ];
  return (
    <Svg width="128" height="90" viewBox="10 262 384 270" role="img" aria-label="预览">
      <path d="M10 262h384v270H10z" fill="#a6caf0" />
      <g stroke="#000" strokeWidth="3" strokeLinejoin="round">
        {land.map(([f, p]) => <polygon key={p} points={p} fill={f} />)}
      </g>
      <path d="M240 275l6-6M258 290l15-2M315 303h16M350 306l14-2" stroke="#000" strokeWidth="4" />
    </Svg>
  );
};

const DescRow = styled.div`
  display: flex;
  align-items: flex-start;
  gap: 5px;
  padding: 8px 3px 0 6px;
`;
const Desc = styled.strong`
  flex: 1;
  height: 22px;
  border: 1px solid #a0a0a0;
  border-width: 1px 0 0 1px;
  font-size: 13px;
  line-height: 22px;
`;
const PushButton = styled.button`
  display: flex;
  align-items: center;
  justify-content: center;
  width: ${(p) => p.$w}px;
  height: 21px;
  padding: 0;
  border: 1px solid #d0d0d0;
  border-radius: 4px;
  background: #fdfdfd;
`;
const Groups = styled.div`
  display: grid;
  grid-template-columns: 239fr 180fr;
  gap: 9px;
  margin-top: 2px;
`;
const Group = styled.fieldset`
  min-width: 0;
  height: 70px;
  margin: 0;
  padding: 0 ${(p) => (p.$wide ? 9 : 7)}px 0 6px;
  border: 1px solid #dcdcdc;
`;
const Legend = styled.legend`
  padding: 0 2px;
`;
const Field = styled.div`
  display: flex;
  align-items: center;
  justify-content: space-between;
  height: 21px;
  margin-bottom: 4px;
`;
const Method = styled.div`
  padding: 2px 0 5px 17px;
`;
const RampRow = styled.div`
  display: flex;
  align-items: center;
  gap: 32px;
  height: 24px;
  margin: 7px 0 2px 3px;
`;
const RampButton = styled.button`
  display: flex;
  align-items: center;
  justify-content: space-between;
  width: 153px;
  height: 24px;
  padding: 0 0 0 3px;
  border: 1px solid #8b8b8b;
  border-radius: 2px;
  background: #fff;
`;
const Ramp = styled.span`
  width: 128px;
  height: 16px;
  background: linear-gradient(90deg, #ffff80, #f2a72e 50%, #9a3a0c 80%, #6b0000);
`;
const TableBox = styled.div`
  height: 154px;
  border: 1px solid #828790;
  background: #fff;
`;
const Table = styled.table`
  width: 100%;
  table-layout: fixed;
  border-collapse: collapse;
  th {
    height: 25px;
    padding: 0 5px;
    font-weight: 400;
    text-align: left;
    border-right: 1px solid #e2e2e2;
  }
  th:first-child { padding-left: 6px; }
  th:last-child { border: 0; }
  td {
    height: 17px;
    padding: 0 3px;
    font-size: 11px;
    line-height: 17px;
    white-space: nowrap;
  }
  td:first-child { padding: 0 0 0 6px; }
`;
const SymbolBar = styled.span`
  display: block;
  width: 47px;
  height: 16px;
  border: 1px solid #6e6e6e;
  background: ${(p) => p.$color};
`;
const FooterRow = styled.div`
  display: flex;
  align-items: center;
  gap: 3px;
  margin-top: 3px;
  label { flex: 1; }
`;
const AdvButton = styled(PushButton)`
  justify-content: flex-end;
  gap: 14px;
  padding-right: 3px;
`;

const tabs = ["常规", "源", "选择", "显示", "符号系统", "字段", "定义查询", "标注", "连接和关联", "时间", "HTML 弹出窗口"];

const LayerProperties = () => (
  <Dialog role="dialog" aria-label="图层属性">
    <DialogTitle>
      图层属性
      <TinyButton aria-label="关闭对话框"><Icon name="closeThin" /></TinyButton>
    </DialogTitle>
    <Tabs role="tablist">
      {tabs.map((t, i) => <Tab key={t} role="tab" aria-selected={i === 4} $active={i === 4}>{t}</Tab>)}
    </Tabs>
    <TabPage>
      <Column>
        <ShowTitle>显示(<u>S</u>):</ShowTitle>
        <ShowList>
          <li>要素</li>
          <li>类别</li>
          <li>
            数量
            <SubList>
              <SubItem $selected><span>分级色彩</span></SubItem>
              <SubItem><span>分级符号</span></SubItem>
              <SubItem><span>比例符号</span></SubItem>
              <SubItem $last><span>点密度</span></SubItem>
            </SubList>
          </li>
          <li>图表</li>
          <li>多个属性</li>
        </ShowList>
        <Preview />
      </Column>
      <Column>
        <DescRow>
          <Desc>使用颜色表示数量。</Desc>
          <PushButton $w={58}>导入(<u>I</u>)...</PushButton>
        </DescRow>
        <Groups>
          <Group>
            <Legend>字段</Legend>
            <Field>
              <label htmlFor="val">值(<u>V</u>):</label>
              <Select id="val" w={153} value="density" />
            </Field>
            <Field>
              <label htmlFor="norm">归一化(<u>N</u>):</label>
              <Select id="norm" w={153} value="无" />
            </Field>
          </Group>
          <Group $wide>
            <Legend>分类</Legend>
            <Method>自然间断点分级法(Jenks)</Method>
            <Field>
              <label htmlFor="num">类(<u>S</u>):</label>
              <Select id="num" w={41} value="4" />
              <PushButton $w={61}>分类(<u>C</u>)...</PushButton>
            </Field>
          </Group>
        </Groups>
        <RampRow>
          <label htmlFor="ramp">色带(<u>R</u>):</label>
          <RampButton id="ramp"><Ramp /><Chevron /></RampButton>
        </RampRow>
        <TableBox>
          <Table>
            <colgroup>
              <col width="51" /><col width="178" /><col width="178" /><col />
            </colgroup>
            <thead>
              <tr><th>符号</th><th>范围</th><th>标注</th><th aria-label="空" /></tr>
            </thead>
            <tbody>
              {classes.map(([c, t]) => (
                <tr key={c}><td><SymbolBar $color={c} /></td><td>{t}</td><td>{t}</td><td /></tr>
              ))}
            </tbody>
          </Table>
        </TableBox>
        <FooterRow>
          <Check $soft type="checkbox" id="feat" />
          <label htmlFor="feat">使用要素值显示类范围(<u>W</u>)</label>
          <AdvButton $w={81}><span>高级(<u>D</u>)</span><Caret /></AdvButton>
        </FooterRow>
      </Column>
    </TabPage>
  </Dialog>
);

export default function App() {
  return (
    <Page>
      <Global />
      <AppToolbars />
      <Workspace>
        <Contents />
        <MapView />
        <CatalogPane />
      </Workspace>
      <BottomStrip />
      <LayerProperties />
    </Page>
  );
}
